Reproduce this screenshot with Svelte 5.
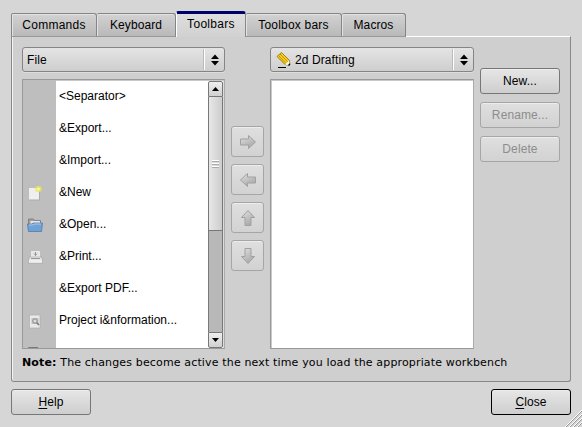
<script>
  const tabs = [
    { label: 'Commands', w: 86, s: 0.25 },
    { label: 'Keyboard', w: 79, s: 0.1 },
    { label: 'Toolbars', w: 70, s: 0.3, active: true },
    { label: 'Toolbox bars', w: 96, s: 0.2 },
    { label: 'Macros', w: 64, s: 0.1 }
  ];
  const items = [
    { label: '<Separator>' },
    { label: '&Export...' },
    { label: '&Import...' },
    { label: '&New', icon: 'new' },
    { label: '&Open...', icon: 'open' },
    { label: '&Print...', icon: 'print' },
    { label: '&Export PDF...' },
    { label: 'Project i&nformation...', icon: 'info' },
    { label: '', icon: 'next' }
  ];
  const arrows = [
    'M1.500 6H9.500V2.500L16.500 9 9.500 15.500V12H1.500Z',
    'M16.500 6H8.500V2.500L1.500 9 8.500 15.500V12H16.500Z',
    'M6 16.500V8.500H2.500L9 1.500 15.500 8.500H12V16.500Z',
    'M6 1.500V9.500H2.500L9 16.500 15.500 9.500H12V1.500Z'
  ];
</script>

{#snippet updown()}
  <span class="updown">
    <svg width="8" height="12" viewBox="0 0 8 12"><path d="M0 5 4 0.5 8 5ZM0 7H8L4 11.5Z" /></svg>
  </span>
{/snippet}

<div class="dialog">
  <div class="tabs">
    {#each tabs as t}
      <div class="tab" class:active={t.active} style="width:{t.w}px;letter-spacing:{t.s}px">{t.label}</div>
    {/each}
  </div>
  <div class="panel">
    <div class="columns">
      <div class="col">
        <div class="combo"><span class="value">File</span>{@render updown()}</div>
        <div class="list">
          <div class="rows">
            {#each items as it}
              <div class="row">
                <div class="gutter">
                  {#if it.icon === 'new'}
                    <svg width="16" height="16" viewBox="0 0 16 16">
                      <path d="M2 3h10v12H2z" fill="#efefed" /><path d="M2 15h10.5V5" stroke="#aaa" fill="none" />
                      <circle cx="11.5" cy="4" r="3.2" fill="#e9e45c" opacity=".75" /><circle cx="11.5" cy="4" r="1.5" fill="#fffb7c" />
                    </svg>
                  {:else if it.icon === 'open'}
                    <svg width="16" height="16" viewBox="0 0 16 16">
                      <path d="M1.5 13V2h5l1 1.500h6v9z" fill="#a1a19c" stroke="#777" stroke-width=".8" /><path d="M3.5 4h9.500v5h-9.500z" fill="#e8e8e8" />
                      <path d="M.500 7h4.500l1-1h9.500l-1 8.500H1.500z" fill="#71a2d4" stroke="#4c7cae" stroke-width=".8" /><path d="M2 8h4l1-1h7" stroke="#a7c9ea" fill="none" />
                    </svg>
                  {:else if it.icon === 'print'}
                    <svg width="16" height="16" viewBox="0 0 16 16">
                      <path d="M4 2h9v7H4z" fill="#e8e8e8" /><path d="M8.5 3v4M7 4.500l1.500 2 1.5-2" stroke="#999" fill="none" />
                      <path d="M2.5 8h12l1 3v3.5h-14V11z" fill="#e4e4e2" stroke="#999" stroke-width=".5" /><path d="M4 9.5h9" stroke="#999" /><path d="M2 12h13" stroke="#fafafa" />
                    </svg>
                  {:else if it.icon === 'info'}
                    <svg width="16" height="16" viewBox="0 0 16 16">
                      <path d="M2.5 2h10.5v13H2.5z" fill="#e9e9e9" stroke="#aaa" stroke-width=".6" /><path d="M4.500 5h7v6h-7z" fill="#c2c2c2" />
                      <circle cx="8" cy="8" r="2.2" fill="#ddd" stroke="#888" /><path d="m9.7 9.700 2.3 2.300" stroke="#777" stroke-width="1.5" />
                    </svg>
                  {:else if it.icon === 'next'}
                    <svg width="16" height="16" viewBox="0 0 16 16">
                      <path d="M0 3.500 2 2h9v3H0z" fill="#777" /><path d="M7 3h5v3H7z" fill="#eee" />
                    </svg>
                  {/if}
                </div>
                <span class="label">{it.label}</span>
              </div>
            {/each}
          </div>
          <div class="scroll">
            <div class="sbtn up"><svg width="7" height="4" viewBox="0 0 7 4"><path d="M0 4 3.5 0 7 4Z" /></svg></div>
            <div class="thumb"><i></i><i></i><i></i></div>
            <div class="track"></div>
            <div class="sbtn down"><svg width="7" height="4" viewBox="0 0 7 4"><path d="M0 0H7L3.5 4Z" /></svg></div>
          </div>
        </div>
      </div>
      <div class="moves">
        {#each arrows as d, i}
          <div class="btn off move">
            <svg width="18" height="18" viewBox="0 0 18 18">
              <defs>
                <linearGradient id="arrow{i}" x1="0" y1="0" x2=".6" y2="1">
                  <stop offset="0" stop-color="#e2e2e2" /><stop offset="1" stop-color="#a8a8a8" />
                </linearGradient>
              </defs>
              <path {d} fill="url(#arrow{i})" stroke="#a0a0a0" />
            </svg>
          </div>
        {/each}
      </div>
      <div class="col wide">
        <div class="combo">
          <svg class="pencil" width="16" height="18" viewBox="0 0 16 18">
            <path d="M1 5.500 5.500 1.500 13.500 9.500 14 14 9 13.500Z" fill="#f5cf1c" stroke="#8a6a08" stroke-width=".8" />
            <path d="m2.5 4.5 8 8.5M4 3l8.300 8.500" stroke="#b47d06" fill="none" stroke-width=".8" />
            <path d="m9 13.500 4-4 1 5z" fill="#f2f2ee" /><path d="m11.500 14.500 2.500-2.500v2.500z" />
            <path d="M2 16.500h8" stroke="#000" />
          </svg>
          <span class="value">2d Drafting</span>{@render updown()}
        </div>
        <div class="list"></div>
      </div>
      <div class="actions">
        <div class="btn">New...</div>
        <div class="btn off">Rename...</div>
        <div class="btn off">Delete</div>
      </div>
    </div>
    <div class="note"><b>Note:</b> The changes become active the next time you load the appropriate workbench</div>
  </div>
  <div class="footer">
    <div class="btn"><span><u>H</u>elp</span></div>
    <div class="btn default"><span><u>C</u>lose</span></div>
  </div>
  <svg class="grip" width="18" height="18" viewBox="0 0 18 18">
    <path d="M1 18 18 1M5 18 18 5M9 18 18 9M13 18l5-5" stroke="#fff" />
    <path d="M2 18 18 2M6 18 18 6M10 18l8-8M14 18l4-4" stroke="#999" />
  </svg>
</div>

<style>
  :global(body) { margin: 0; background: #d6d6d6; }
  .dialog, .dialog * { box-sizing: border-box; }
  .dialog {
    position: relative; width: 582px; height: 427px; padding: 11px 11px 0 11px; overflow: hidden;
    background: #d6d6d6; color: #000; font: 12px/14px "Liberation Sans", Arial, sans-serif;
    letter-spacing: .1px; white-space: nowrap;
  }
  svg { display: block; flex: none; }
  .tabs { display: flex; align-items: flex-end; height: 26px; position: relative; z-index: 1; }
  .tab {
    height: 24px; padding-top: 4px; text-align: center; border: 1px solid #858585; border-left-width: 0;
    border-bottom-color: #999; border-radius: 2px 3px 0 0; background: linear-gradient(#d2d2d2, #b9b9b9);
    box-shadow: inset 1px 1px #e2e2e2;
  }
  .tab:first-child { border-left-width: 1px; }
  .active {
    height: 26px; padding-top: 3px; border: 0; border-top: 3px solid #00006c; border-left: 1px solid #fff;
    border-right: 1px solid #888; background: linear-gradient(#dedede, #d1d1d1); box-shadow: none;
  }
  .panel {
    height: 346px; margin-top: -1px; padding: 10px 0 0 10px; background: #cfcfcf; border: 1px solid #888;
    border-top-color: #fff; border-radius: 0 0 3px 3px; box-shadow: inset 1px 0 #f3f3f3;
  }
  .columns { display: flex; }
  .col { width: 203px; flex: none; }
  .wide { width: 204px; }
  .combo {
    display: flex; align-items: center; height: 25px; padding-left: 4px; border: 1px solid #858585;
    border-radius: 3px; background: linear-gradient(#e4e4e4, #cecece); box-shadow: 0 1px #ddd;
  }
  .value { flex: 1; }
  .pencil { margin: 0 3px 0 1px; }
  .updown {
    display: flex; align-items: center; justify-content: center; width: 20px; height: 21px;
    border-left: 1px solid #fff; box-shadow: -1px 0 #bbb;
  }
  .list {
    display: flex; height: 270px; margin-top: 7px; border: 1px solid #999; border-right-color: #aaa;
    background: #fff; box-shadow: inset 1px 1px #c9c9c9; overflow: hidden;
  }
  .rows { flex: 1; height: 268px; overflow: hidden; }
  .row { display: flex; height: 32px; }
  .gutter { display: flex; align-items: center; width: 33px; padding: 1px 0 0 4px; background: #bebebe; }
  .label { margin: 9px 0 0 3px; letter-spacing: 0; }
  .scroll {
    display: flex; flex-direction: column; width: 16px; height: 267px; margin-top: 1px;
    border-right: 1px solid #ddd;
  }
  .sbtn {
    display: flex; align-items: center; justify-content: center; height: 16px; border: 1px solid #777;
    border-radius: 2px 2px 0 0; background: linear-gradient(#eee, #d0d0d0);
  }
  .down { border-radius: 0 0 2px 2px; }
  .thumb {
    display: flex; flex-direction: column; align-items: center; justify-content: center; gap: 1px; height: 134px;
    border: solid #777; border-width: 0 1px 1px; background: linear-gradient(90deg, #e7e7e7, #cdcdcd);
  }
  .thumb i { width: 7px; height: 2px; background: #fff; border-bottom: 1px solid #aaa; }
  .track { flex: 1; border: solid #777; border-width: 0 1px; background: #b8b8b8; }
  .moves { display: flex; flex-direction: column; gap: 7px; padding: 79px 6px 0; width: 45px; flex: none; }
  .btn {
    display: flex; align-items: center; justify-content: center; width: 80px; height: 26px;
    border: 1px solid #777; border-radius: 3px; background: linear-gradient(#e6e6e6, #cecece);
    box-shadow: inset 0 1px #ededed;
  }
  .off { color: #8d8d8d; border-color: #a6a6a6; background: linear-gradient(#dfdfdf, #d2d2d2); }
  .move { width: 33px; height: 31px; }
  .actions { display: flex; flex-direction: column; gap: 8px; padding: 21px 0 0 6px; }
  .actions .btn { letter-spacing: .1px; }
  .note { margin-top: 7px; font: 11px/13px "DejaVu Sans", sans-serif; letter-spacing: .15px; }
  .footer { display: flex; justify-content: space-between; margin-top: 7px; }
  .default { border-color: #000; }
  u { text-underline-offset: 2px; text-decoration-thickness: 1px; }
  .grip { position: absolute; right: 0; bottom: 0; }
</style>
